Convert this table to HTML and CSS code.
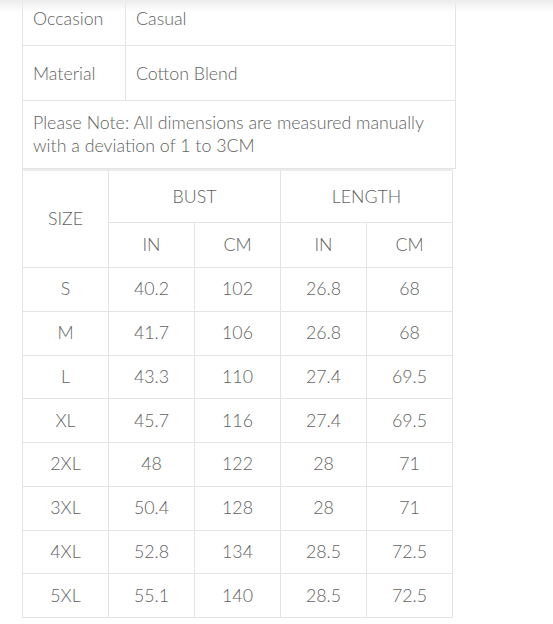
FILE: index.html
```html
<!DOCTYPE html>
<html>
<head>
<meta charset="utf-8">
<link rel="stylesheet" href="styles.css">
</head>
<body>
<div class="shade"></div>
<div class="wrap">
  <table class="attrs">
    <colgroup><col class="c-key"><col></colgroup>
    <tr class="r-occ"><td>Occasion</td><td>Casual</td></tr>
    <tr class="r-mat"><td>Material</td><td>Cotton Blend</td></tr>
    <tr class="r-note"><td colspan="2">Please Note: All dimensions are measured manually with a deviation of 1 to 3CM</td></tr>
  </table>
  <table class="sizes">
    <colgroup><col class="c"><col class="c"><col class="c"><col class="c"><col class="c"></colgroup>
    <tr class="h1"><th rowspan="2">SIZE</th><th colspan="2">BUST</th><th colspan="2">LENGTH</th></tr>
    <tr class="h2"><th>IN</th><th>CM</th><th>IN</th><th>CM</th></tr>
    <tr><td>S</td><td>40.2</td><td>102</td><td>26.8</td><td>68</td></tr>
    <tr><td>M</td><td>41.7</td><td>106</td><td>26.8</td><td>68</td></tr>
    <tr><td>L</td><td>43.3</td><td>110</td><td>27.4</td><td>69.5</td></tr>
    <tr><td>XL</td><td>45.7</td><td>116</td><td>27.4</td><td>69.5</td></tr>
    <tr><td>2XL</td><td>48</td><td>122</td><td>28</td><td>71</td></tr>
    <tr><td>3XL</td><td>50.4</td><td>128</td><td>28</td><td>71</td></tr>
    <tr><td>4XL</td><td>52.8</td><td>134</td><td>28.5</td><td>72.5</td></tr>
    <tr><td>5XL</td><td>55.1</td><td>140</td><td>28.5</td><td>72.5</td></tr>
  </table>
</div>
</body>
</html>
```
FILE: styles.css
```css
html, body {
  margin: 0;
  padding: 0;
  background: #fff;
}
body {
  font-family: Lato, "Open Sans", sans-serif;
  font-size: 17.8px;
  font-weight: 300;
  color: #626262;
}
.shade {
  position: fixed;
  left: 0;
  top: 0;
  width: 100%;
  height: 12px;
  background: linear-gradient(to bottom, #ececec, rgba(255,255,255,0));
  pointer-events: none;
}
.wrap {
  margin-top: -10px;
  padding-left: 22px;
}
table {
  border-collapse: collapse;
}
td, th {
  border: 1px solid #e4e4e4;
  font-weight: 300;
  padding: 0 10px;
}
.attrs {
  width: 434px;
  table-layout: fixed;
}
.attrs col.c-key {
  width: 103px;
}
.attrs td {
  text-align: left;
  line-height: 23px;
}
.r-occ td, .r-mat td {
  height: 54px;
  padding: 0 10px;
}
.r-note td {
  height: 47px;
  padding: 9px 10px 11px;
}
.sizes {
  width: 430px;
  table-layout: fixed;
  border-top: 2px solid #ececec;
}
.sizes col.c {
  width: 86px;
}
.sizes th, .sizes td {
  text-align: center;
  padding: 0 0 2px;
}
.sizes .h1 th {
  height: 49px;
}
.sizes .h2 th {
  height: 42px;
}
.sizes td {
  height: 40.75px;
}
```
